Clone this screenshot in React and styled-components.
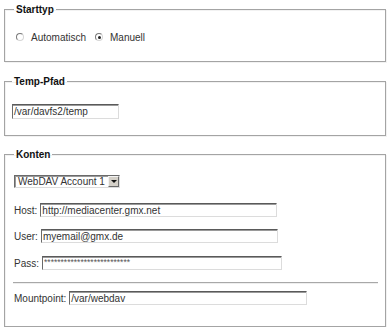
import React from "react";
import styled, { createGlobalStyle } from "styled-components";

const Global = createGlobalStyle`
  html, body { margin: 0; padding: 0; background: #fff; }
  body { font-family: "Liberation Sans", Arial, sans-serif; font-size: 10px; color: #222; }
`;

const Page = styled.div`
  display: flex;
  flex-direction: column;
  padding: 4px 6px 0 4px;
`;

const Fieldset = styled.fieldset`
  margin: ${(p) => p.$mt || 0}px 0 0 0;
  padding: ${(p) => p.$pad};
  border: 1px solid #a4a4a4;
  box-shadow: inset 1px 1px 0 #f2f2f2, 1px 1px 0 #f2f2f2;
  min-width: 0;
`;

const Legend = styled.legend`
  padding: 0 2px;
  margin-left: 0;
  font-weight: bold;
  font-size: 10px;
  color: #111;
`;

const RadioRow = styled.div`
  display: flex;
  align-items: center;
  height: 14px;
  padding-left: 2px;
`;

const RadioItem = styled.label`
  display: flex;
  align-items: center;
  gap: 7px;
  margin-right: 9px;
  color: #333;
`;

const Radio = styled.span`
  position: relative;
  width: 6px;
  height: 6px;
  border-radius: 50%;
  border: 1px solid;
  border-color: #7a7a7a #d6d6d6 #d6d6d6 #7a7a7a;
  background: #fff;
  &::after {
    content: "";
    display: ${(p) => (p.$checked ? "block" : "none")};
    position: absolute;
    left: 1.5px;
    top: 1.5px;
    width: 3px;
    height: 3px;
    border-radius: 50%;
    background: #222;
  }
`;

const TextBox = styled.div`
  box-sizing: border-box;
  width: ${(p) => p.$w}px;
  height: ${(p) => p.$h || 14}px;
  border: 1px solid;
  border-color: #5a5a5a #dcdcdc #dcdcdc #6a6a6a;
  box-shadow: inset 0 1px 0 #9a9a9a;
  padding: 1px 2px 0 1px;
  font-size: 10px;
  line-height: 11px;
  color: #333;
  white-space: nowrap;
  overflow: hidden;
  background: #fff;
`;

const PassText = styled.span`
  font-size: 8.5px;
  letter-spacing: 0;
  position: relative;
  top: -2px;
  color: #555;
`;

const Select = styled.div`
  box-sizing: border-box;
  width: 106px;
  height: 13px;
  display: flex;
  align-items: center;
  justify-content: space-between;
  border: 1px solid;
  border-color: #6a6a6a #dcdcdc #dcdcdc #6a6a6a;
  box-shadow: inset 1px 1px 0 #9a9a9a;
  padding-left: 3px;
  color: #333;
  font-size: 10px;
  white-space: nowrap;
`;

const Arrow = styled.span`
  width: 11px;
  height: 11px;
  background: #d4d0c8;
  border: 1px solid;
  border-color: #f4f4f4 #6a6a6a #6a6a6a #f4f4f4;
  box-sizing: border-box;
  display: flex;
  align-items: center;
  justify-content: center;
  &::after {
    content: "";
    border-left: 3px solid transparent;
    border-right: 3px solid transparent;
    border-top: 3px solid #111;
  }
`;

const Row = styled.div`
  display: flex;
  align-items: center;
  gap: 3px;
  color: #333;
  margin-top: ${(p) => p.$mt || 0}px;
`;

const Stack = styled.div`
  display: flex;
  flex-direction: column;
`;

const Rule = styled.div`
  height: 0;
  border-top: 1px solid #a8a8a8;
  border-bottom: 1px solid #eee;
  margin: ${(p) => p.$mt}px -1px 0 -1px;
`;

export default function App() {
  return (
    <>
      <Global />
      <Page>
        <Fieldset $pad="15px 8px 17px 9px">
          <Legend>Starttyp</Legend>
          <RadioRow>
            <RadioItem>
              <Radio />
              Automatisch
            </RadioItem>
            <RadioItem>
              <Radio $checked />
              Manuell
            </RadioItem>
          </RadioRow>
        </Fieldset>

        <Fieldset $mt={14} $pad="17px 8px 16px 7px">
          <Legend>Temp-Pfad</Legend>
          <TextBox $w={107} $h={15}>/var/davfs2/temp</TextBox>
        </Fieldset>

        <Fieldset $mt={13} $pad="15px 8px 21px 9px">
          <Legend>Konten</Legend>
          <Stack>
            <Select>
              WebDAV Account 1
              <Arrow />
            </Select>
            <Row $mt={15}>
              Host:
              <TextBox $w={237}>http://mediacenter.gmx.net</TextBox>
            </Row>
            <Row $mt={12}>
              User:
              <TextBox $w={237}>myemail@gmx.de</TextBox>
            </Row>
            <Row $mt={13}>
              Pass:
              <TextBox $w={240}>
                <PassText>**************************</PassText>
              </TextBox>
            </Row>
            <Rule $mt={12} />
            <Row $mt={7}>
              Mountpoint:
              <TextBox $w={238}>/var/webdav</TextBox>
            </Row>
          </Stack>
        </Fieldset>
      </Page>
    </>
  );
}
